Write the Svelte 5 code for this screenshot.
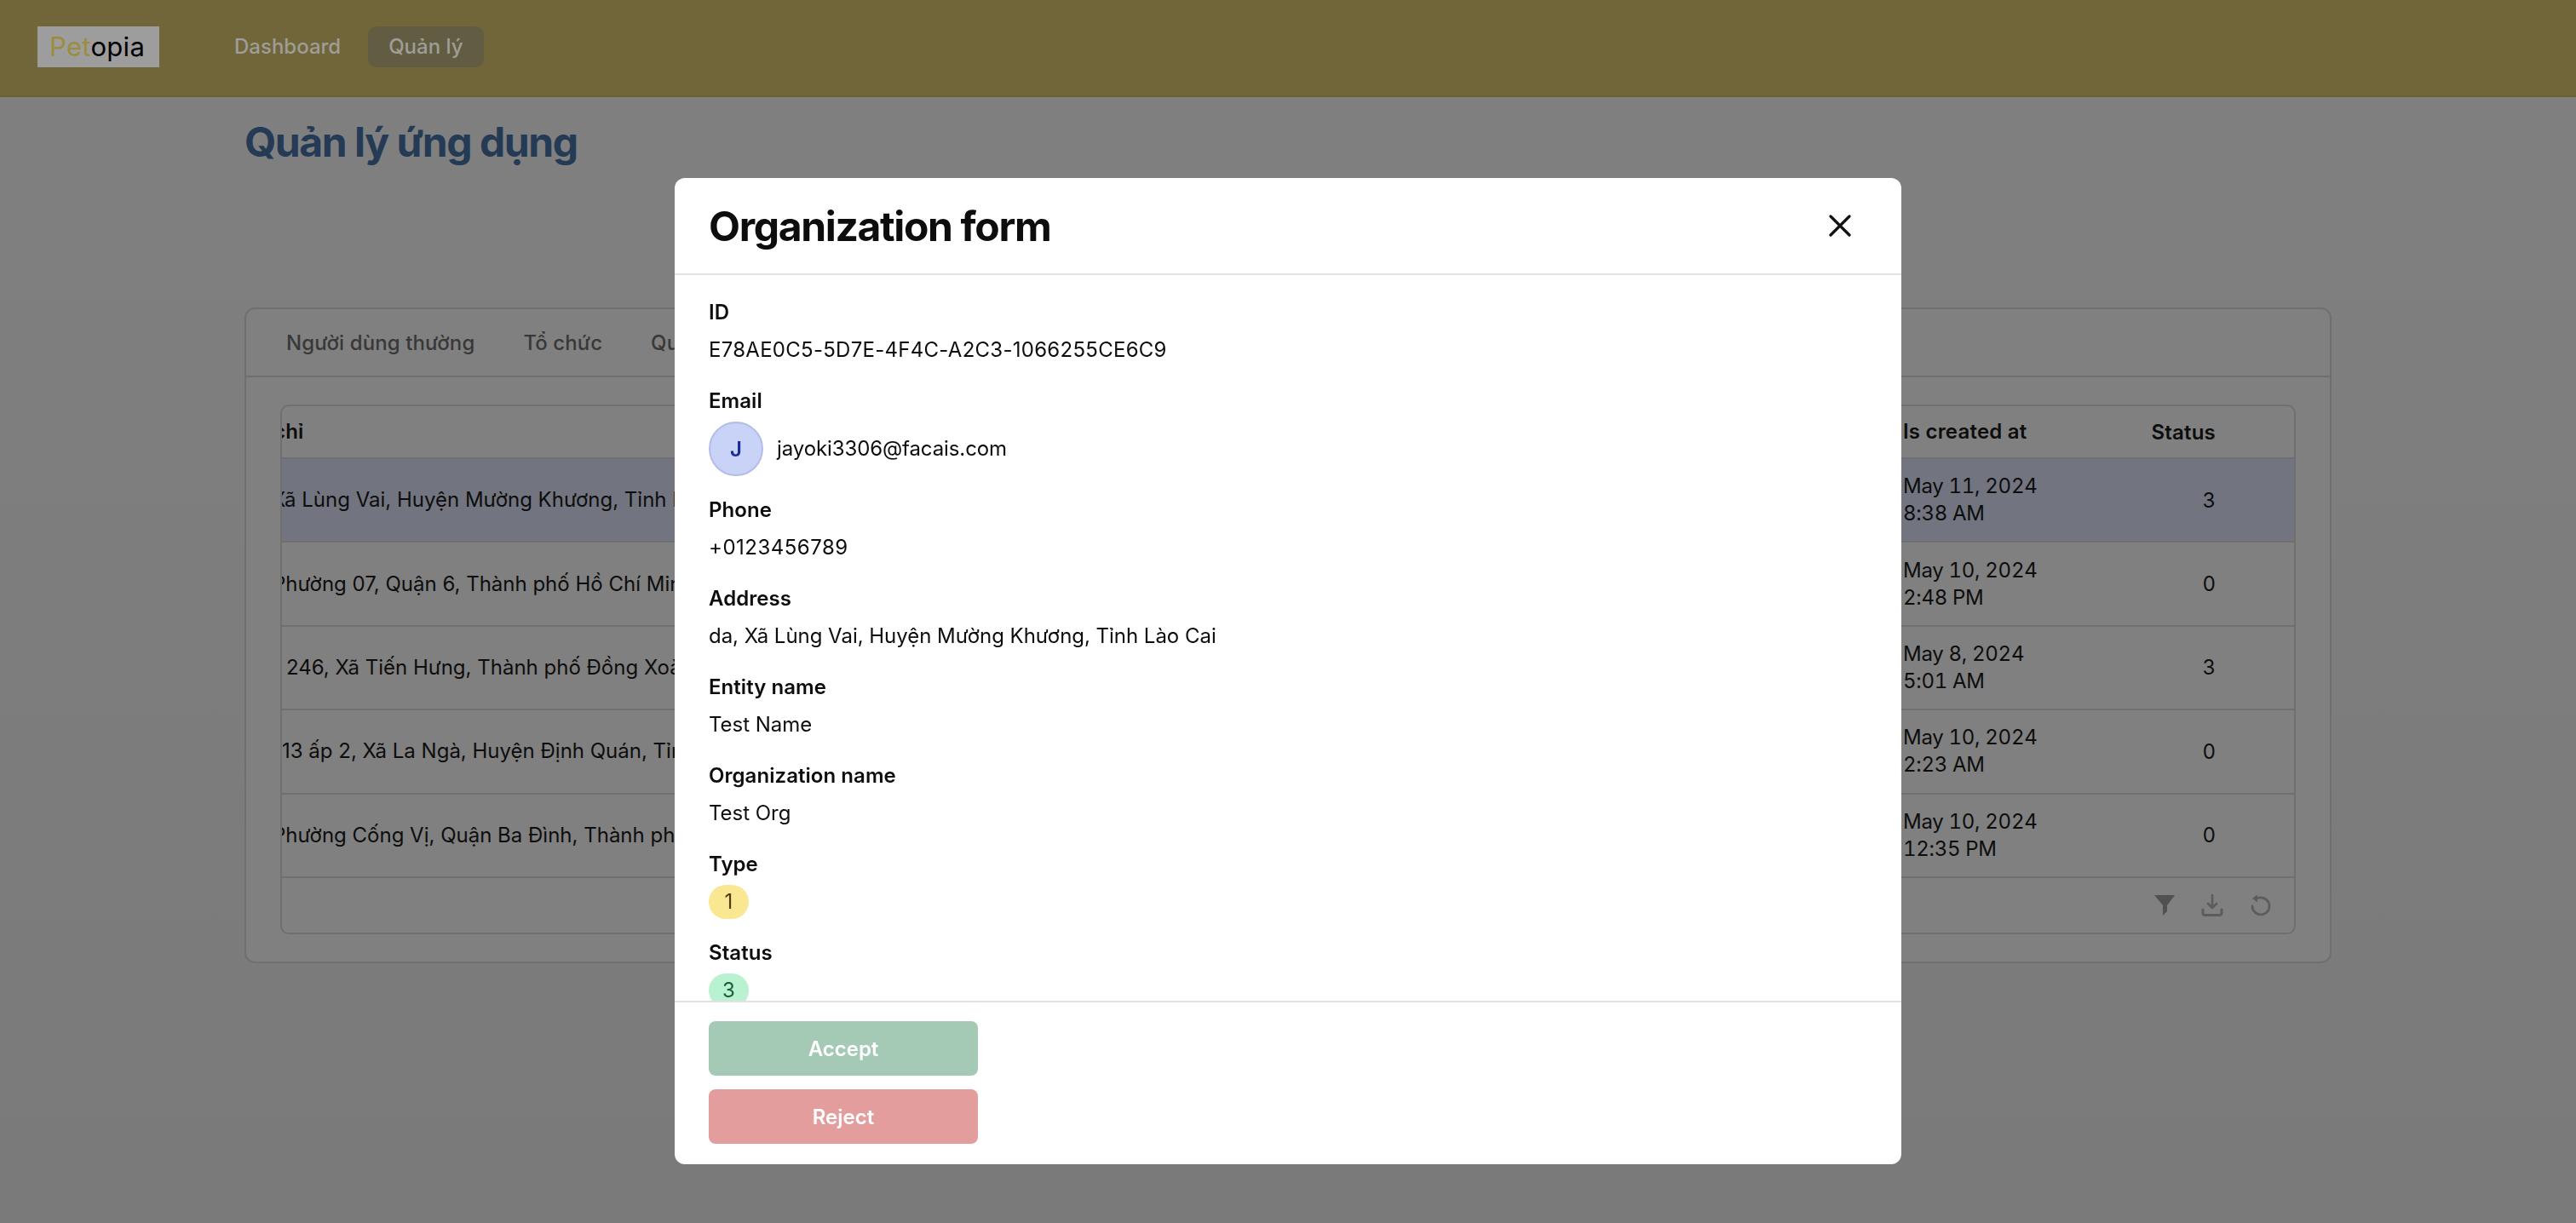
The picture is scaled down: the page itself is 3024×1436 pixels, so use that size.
<script>
  const rows = [
    { addr: 'Xã Lùng Vai, Huyện Mường Khương, Tỉnh Lào Cai', x: -12, date: 'May 11, 2024', time: '8:38 AM', status: 3, selected: true },
    { addr: 'Phường 07, Quận 6, Thành phố Hồ Chí Minh', x: -11, date: 'May 10, 2024', time: '2:48 PM', status: 0 },
    { addr: '246, Xã Tiến Hưng, Thành phố Đồng Xoài, Tỉnh Bình Phước', x: 5, date: 'May 8, 2024', time: '5:01 AM', status: 3 },
    { addr: '13 ấp 2, Xã La Ngà, Huyện Định Quán, Tỉnh Đồng Nai', x: 0, date: 'May 10, 2024', time: '2:23 AM', status: 0 },
    { addr: 'Phường Cống Vị, Quận Ba Đình, Thành phố Hà Nội', x: -11, date: 'May 10, 2024', time: '12:35 PM', status: 0 }
  ];
  const simple = [
    ['Address', 'da, Xã Lùng Vai, Huyện Mường Khương, Tỉnh Lào Cai'],
    ['Entity name', 'Test Name'],
    ['Organization name', 'Test Org']
  ];
</script>

<div class="page">
  <header class="topbar">
    <div class="logo"><span class="pet">Pet</span>opia</div>
    <nav class="nav">
      <span class="nav-item">Dashboard</span>
      <span class="nav-item active">Quản lý</span>
    </nav>
  </header>

  <main class="main">
    <h1 class="page-title">Quản lý ứng dụng</h1>
    <section class="card">
      <div class="tabs">
        <span>Người dùng thường</span>
        <span>Tổ chức</span>
        <span>Quản trị viên</span>
      </div>
      <div class="table-area">
        <div class="table">
          <div class="row head">
            <div class="addr"><span class="shift head-shift">chỉ</span></div>
            <div class="created">Is created at</div>
            <div class="status">Status</div>
          </div>
          {#each rows as r}
            <div class="row" class:selected={r.selected}>
              <div class="addr"><span class="shift" style="margin-left:{r.x}px">{r.addr}</span></div>
              <div class="created">{r.date}<br />{r.time}</div>
              <div class="status">{r.status}</div>
            </div>
          {/each}
          <div class="table-foot">
            <svg class="ico" viewBox="0 0 26 26" width="26" height="26"><path d="M1 1h24L16 13v7l-5 5V13z" fill="#515151" /></svg>
            <svg class="ico" viewBox="0 0 26 26" width="26" height="26" fill="none" stroke="#5c5c5c" stroke-width="2.6" stroke-linecap="round" stroke-linejoin="round"><path d="M13 1v14M8 11l5 5 5-5" /><path d="M2 18v4a2.5 2.5 0 0 0 2.5 2.5h17A2.5 2.5 0 0 0 24 22v-4" stroke-width="3" /></svg>
            <svg class="ico" viewBox="0 0 26 26" width="26" height="26" fill="none"><path d="M8.5 5.5A10 10 0 1 1 4 14" stroke="#5c5c5c" stroke-width="2.8" stroke-linecap="round" /><path d="M10 0.5v9l-6-4.5z" fill="#5c5c5c" /></svg>
          </div>
        </div>
      </div>
    </section>
  </main>
</div>

<div class="modal" role="dialog" aria-label="Organization form">
  <div class="modal-head">
    <h2>Organization form</h2>
    <svg class="close" viewBox="0 0 26 26" width="26" height="26" fill="none" stroke="#111" stroke-width="3.2" stroke-linecap="round"><path d="M2 2l22 22M24 2L2 24" /></svg>
  </div>
  <div class="modal-body">
    <div class="field">
      <div class="label">ID</div>
      <div class="value id-value">E78AE0C5-5D7E-4F4C-A2C3-1066255CE6C9</div>
    </div>
    <div class="field email">
      <div class="label">Email</div>
      <div class="email-row">
        <span class="avatar">J</span>
        <span class="value email-value">jayoki3306@facais.com</span>
      </div>
    </div>
    <div class="field">
      <div class="label">Phone</div>
      <div class="value phone-value">+0123456789</div>
    </div>
    {#each simple as f}
      <div class="field">
        <div class="label">{f[0]}</div>
        <div class="value">{f[1]}</div>
      </div>
    {/each}
    <div class="field badge-field">
      <div class="label">Type</div>
      <span class="badge yellow">1</span>
    </div>
    <div class="field badge-field">
      <div class="label">Status</div>
      <span class="badge green">3</span>
    </div>
  </div>
  <div class="modal-foot">
    <button class="btn accept">Accept</button>
    <button class="btn reject">Reject</button>
  </div>
</div>

<style>
  :global(body) {
    margin: 0;
    background: #7d7d7d;
    font-family: Inter, "Liberation Sans", sans-serif;
    color: #0d0d0d;
  }
  .page {
    height: 1436px;
    overflow: hidden;
    background: linear-gradient(#808080, #7a7a7a);
  }
  .topbar {
    height: 114px;
    box-sizing: border-box;
    border-bottom: 2px solid #6b6034;
    background: #71663a;
    display: flex;
    align-items: center;
    padding: 0 0 2px 44px;
  }
  .logo {
    width: 143px;
    height: 48px;
    box-sizing: border-box;
    background: #9d9d9d;
    color: #000;
    font-size: 31px;
    line-height: 47px;
    letter-spacing: 0.3px;
    padding-left: 14px;
  }
  .pet {
    color: #9c8d3c;
  }
  .nav {
    display: flex;
    gap: 8px;
    margin-left: 64px;
  }
  .nav-item {
    height: 48px;
    box-sizing: border-box;
    padding: 0 24px;
    font-size: 24px;
    font-weight: 500;
    line-height: 48px;
    color: #9e9e96;
    border-radius: 10px;
  }
  .nav-item.active {
    background: #625c43;
  }
  .main {
    padding-left: 287px;
    width: 2450px;
  }
  .page-title {
    margin: 0;
    padding-top: 24px;
    height: 247px;
    box-sizing: border-box;
    font-size: 48px;
    line-height: 58px;
    font-weight: 700;
    letter-spacing: -0.03em;
    color: #243a55;
  }
  .card {
    height: 770px;
    box-sizing: border-box;
    border: 2px solid #6f6f6f;
    border-radius: 12px;
    background: #808080;
  }
  .tabs {
    height: 80px;
    box-sizing: border-box;
    border-bottom: 2px solid #6f6f6f;
    display: flex;
    gap: 57px;
    align-items: center;
    padding-left: 47px;
    font-size: 24px;
    font-weight: 500;
    letter-spacing: 0.1px;
    color: #383838;
  }
  .table-area {
    padding: 32px 40px 0;
  }
  .table {
    height: 622px;
    box-sizing: border-box;
    border: 2px solid #6f6f6f;
    border-radius: 10px;
    overflow: hidden;
    font-size: 24px;
    color: #0d0d0d;
  }
  .row {
    height: 98.4px;
    box-sizing: border-box;
    border-bottom: 2px solid #6f6f6f;
    display: grid;
    grid-template-columns: 1fr 291px 76px;
    padding-right: 92px;
    align-items: center;
  }
  .row.head {
    height: 62px;
    font-weight: 600;
    letter-spacing: 0.2px;
  }
  .row.selected {
    background: #72757f;
  }
  .addr {
    white-space: nowrap;
    overflow: hidden;
    line-height: 32px;
  }
  .shift {
    display: inline-block;
  }
  .head-shift {
    margin-left: -10px;
  }
  .created {
    line-height: 32px;
    white-space: nowrap;
    font-variant-numeric: tabular-nums;
    letter-spacing: -0.3px;
  }
  .head .created {
    font-variant-numeric: normal;
    letter-spacing: 0.2px;
  }
  .status {
    text-align: right;
    font-variant-numeric: tabular-nums;
  }
  .table-foot {
    display: flex;
    justify-content: flex-end;
    align-items: center;
    gap: 30px;
    height: 64px;
    padding-right: 27px;
  }
  .modal {
    position: fixed;
    left: 792px;
    top: 209px;
    width: 1440px;
    height: 1158px;
    display: flex;
    flex-direction: column;
    background: #fff;
    border-radius: 12px;
    overflow: hidden;
  }
  .modal-head {
    height: 114px;
    flex: none;
    box-sizing: border-box;
    border-bottom: 2px solid #e2e2e2;
    display: flex;
    align-items: center;
    justify-content: space-between;
    padding: 0 59px 0 40px;
  }
  .modal-head h2 {
    margin: 0;
    font-size: 48px;
    font-weight: 700;
    letter-spacing: -0.028em;
    color: #0d0d0d;
  }
  .modal-body {
    flex: 1;
    overflow: hidden;
    padding: 28px 40px 0;
  }
  .field {
    margin-bottom: 28px;
  }
  .field.email {
    margin-bottom: 24px;
  }
  .field.badge-field {
    margin-bottom: 24px;
  }
  .label {
    font-size: 24px;
    font-weight: 600;
    line-height: 32px;
    letter-spacing: 0.05px;
    margin-bottom: 12px;
    color: #0d0d0d;
  }
  .email .label,
  .badge-field .label {
    margin-bottom: 8px;
  }
  .value {
    font-size: 24px;
    line-height: 32px;
    letter-spacing: -0.03px;
    color: #0d0d0d;
  }
  .id-value {
    letter-spacing: 0.27px;
  }
  .phone-value {
    letter-spacing: 0.5px;
  }
  .email-value {
    letter-spacing: -0.1px;
  }
  .email-row {
    display: flex;
    align-items: center;
    gap: 16px;
  }
  .avatar {
    width: 64px;
    height: 64px;
    box-sizing: border-box;
    border-radius: 50%;
    border: 2px solid #b3bde6;
    background: #c9d2f7;
    color: #182c9c;
    font-size: 24px;
    font-weight: 600;
    display: flex;
    align-items: center;
    justify-content: center;
  }
  .badge {
    display: block;
    width: 47px;
    height: 40px;
    border-radius: 20px;
    text-align: center;
    font-size: 24px;
    line-height: 40px;
  }
  .yellow {
    background: #fae791;
    color: #4d3d0c;
  }
  .green {
    background: #b9f2d1;
    color: #1b5a3a;
  }
  .modal-foot {
    height: 192px;
    flex: none;
    box-sizing: border-box;
    border-top: 2px solid #e2e2e2;
    padding: 22px 40px 0;
    display: flex;
    flex-direction: column;
    align-items: flex-start;
    gap: 16px;
  }
  .btn {
    width: 316px;
    height: 64px;
    border: 0;
    border-radius: 8px;
    color: #fff;
    font: 600 24px Inter, "Liberation Sans", sans-serif;
    padding: 0;
  }
  .accept {
    background: #a4c9b5;
  }
  .reject {
    background: #e39d9c;
  }
</style>
